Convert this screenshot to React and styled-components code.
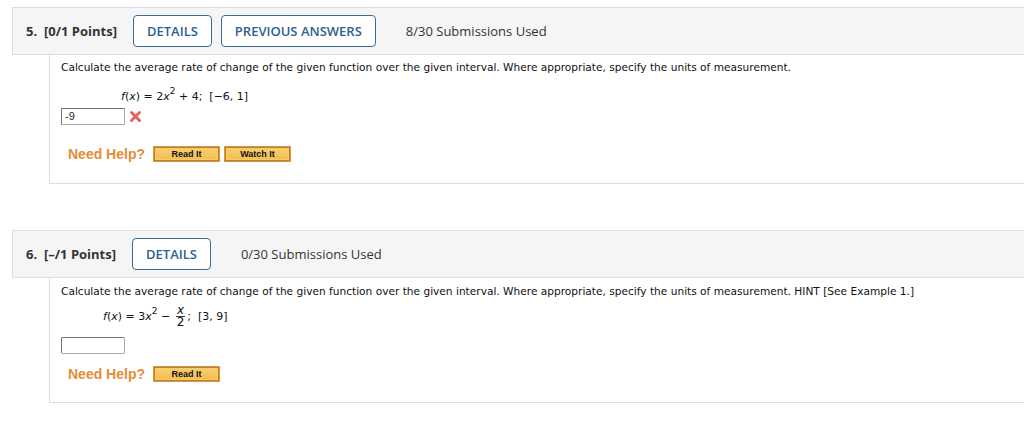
import React from "react";
import styled, { createGlobalStyle } from "styled-components";

const GlobalStyle = createGlobalStyle`
  body {
    margin: 0;
    background: #fff;
    font-family: "Open Sans", "Liberation Sans", sans-serif;
    color: #333;
  }
`;

const Page = styled.div`
  width: 1024px;
  height: 444px;
  overflow: hidden;
  padding: 7px 0 0 12px;
  box-sizing: border-box;
`;

const Question = styled.section`
  margin-bottom: ${props => props.gap || "0px"};
`;

const Header = styled.div`
  display: flex;
  align-items: center;
  height: 46px;
  margin-right: -20px;
  padding-left: 13px;
  background: #f5f5f5;
  border: 1px solid #dedede;
  border-right: none;
  font-size: 13px;
`;

const Points = styled.span`
  font-weight: 700;
  color: #333;
  margin-right: 16px;
  white-space: pre;
`;

const OutlineButton = styled.button`
  height: 32px;
  padding: 0 13px;
  margin-right: 9px;
  background: #fff;
  border: 1.5px solid #3b6a9c;
  border-radius: 4px;
  color: #2d5f91;
  font-family: "Open Sans", sans-serif;
  font-size: 13px;
  font-weight: 600;
  cursor: pointer;
`;

const Submissions = styled.span`
  margin-left: 21px;
  color: #333;
`;

const Body = styled.div`
  margin-left: 37px;
  margin-right: -20px;
  border-left: 1px solid #dedede;
  border-bottom: 1px solid #dedede;
  padding: ${props => props.pad || "5px 0 0 11px"};
  height: ${props => props.h};
  box-sizing: border-box;
  font-family: Verdana, "DejaVu Sans", sans-serif;
  font-size: 11px;
  color: #111;
`;

const Prompt = styled.div`
  font-size: 10.6px;
  line-height: 14px;
`;

const Formula = styled.div`
  display: flex;
  align-items: center;
  margin: ${props => props.m};
  padding-left: ${props => props.indent || "60px"};
  height: ${props => props.h || "20px"};
  font-size: 11px;
  white-space: pre;
`;

const Italic = styled.i`
  font-style: italic;
`;

const Sup = styled.span`
  font-size: 9px;
  position: relative;
  top: -5px;
`;

const Frac = styled.span`
  display: inline-flex;
  flex-direction: column;
  align-items: center;
  margin: 0 2px;
  font-size: 12px;
  line-height: 11px;
  span {
    padding: 0 1px;
  }
  span + span {
    border-top: 1px solid #333;
  }
`;

const AnswerRow = styled.div`
  display: flex;
  align-items: center;
  gap: 4px;
  margin-top: ${props => props.mt};
`;

const Answer = styled.div`
  width: 64px;
  height: 17px;
  box-sizing: border-box;
  border: 1px solid #aaa;
  border-top-color: #777;
  border-left-color: #777;
  border-radius: ${props => (props.round ? "2px" : "0")};
  background: #fff;
  padding-left: 3px;
  font-family: "Liberation Sans", Arial, sans-serif;
  font-size: 11px;
  line-height: 15px;
  color: #222;
`;

const HelpRow = styled.div`
  display: flex;
  align-items: center;
  margin-top: ${props => props.mt};
  padding-left: 7px;
`;

const NeedHelp = styled.span`
  font-family: "Liberation Sans", Arial, sans-serif;
  font-size: 14px;
  font-weight: 700;
  color: #e48d33;
  margin-right: 8px;
`;

const HelpButton = styled.button`
  width: 67px;
  height: 16px;
  margin-right: 4px;
  padding: 0;
  background: linear-gradient(#f8d274, #f2bb4c);
  border: 1px solid #dd9540;
  box-shadow: inset 0 0 0 1px #c07c2a, inset 0 0 0 2px #f7cd6c;
  font-family: "Liberation Sans", Arial, sans-serif;
  font-size: 9px;
  font-weight: 700;
  color: #111;
  line-height: 14px;
`;

const WrongMark = () => (
  <svg width="13" height="13" viewBox="0 0 13 13">
    <path
      d="M2.5 2.5 L10.5 10.5 M10.5 2.5 L2.5 10.5"
      stroke="#e66060"
      strokeWidth="3"
      strokeLinecap="round"
    />
  </svg>
);

export default function App() {
  return (
    <Page>
      <GlobalStyle />
      <Question gap="46px">
        <Header>
          <Points>{"5.  [0/1 Points]"}</Points>
          <OutlineButton>DETAILS</OutlineButton>
          <OutlineButton>PREVIOUS ANSWERS</OutlineButton>
          <Submissions>8/30 Submissions Used</Submissions>
        </Header>
        <Body h="129px">
          <Prompt>
            Calculate the average rate of change of the given function over the
            given interval. Where appropriate, specify the units of measurement.
          </Prompt>
          <Formula m="12px 0 0 0">
            <Italic>f</Italic>(<Italic>x</Italic>) = 2<Italic>x</Italic>
            <Sup>2</Sup> + 4;  [−6, 1]
          </Formula>
          <AnswerRow mt="2px">
            <Answer>-9</Answer>
            <WrongMark />
          </AnswerRow>
          <HelpRow mt="21px">
            <NeedHelp>Need Help?</NeedHelp>
            <HelpButton>Read It</HelpButton>
            <HelpButton>Watch It</HelpButton>
          </HelpRow>
        </Body>
      </Question>
      <Question>
        <Header>
          <Points>{"6.  [–/1 Points]"}</Points>
          <OutlineButton>DETAILS</OutlineButton>
          <Submissions>0/30 Submissions Used</Submissions>
        </Header>
        <Body h="125px" pad="6px 0 0 11px">
          <Prompt>
            Calculate the average rate of change of the given function over the
            given interval. Where appropriate, specify the units of measurement.
            HINT [See Example 1.]
          </Prompt>
          <Formula m="5px 0 0 0" indent="42px" h="26px">
            <Italic>f</Italic>(<Italic>x</Italic>) = 3<Italic>x</Italic>
            <Sup>2</Sup> −{" "}
            <Frac>
              <span>
                <Italic>x</Italic>
              </span>
              <span>2</span>
            </Frac>
            ;  [3, 9]
          </Formula>
          <AnswerRow mt="8px">
            <Answer round />
          </AnswerRow>
          <HelpRow mt="12px">
            <NeedHelp>Need Help?</NeedHelp>
            <HelpButton>Read It</HelpButton>
          </HelpRow>
        </Body>
      </Question>
    </Page>
  );
}
